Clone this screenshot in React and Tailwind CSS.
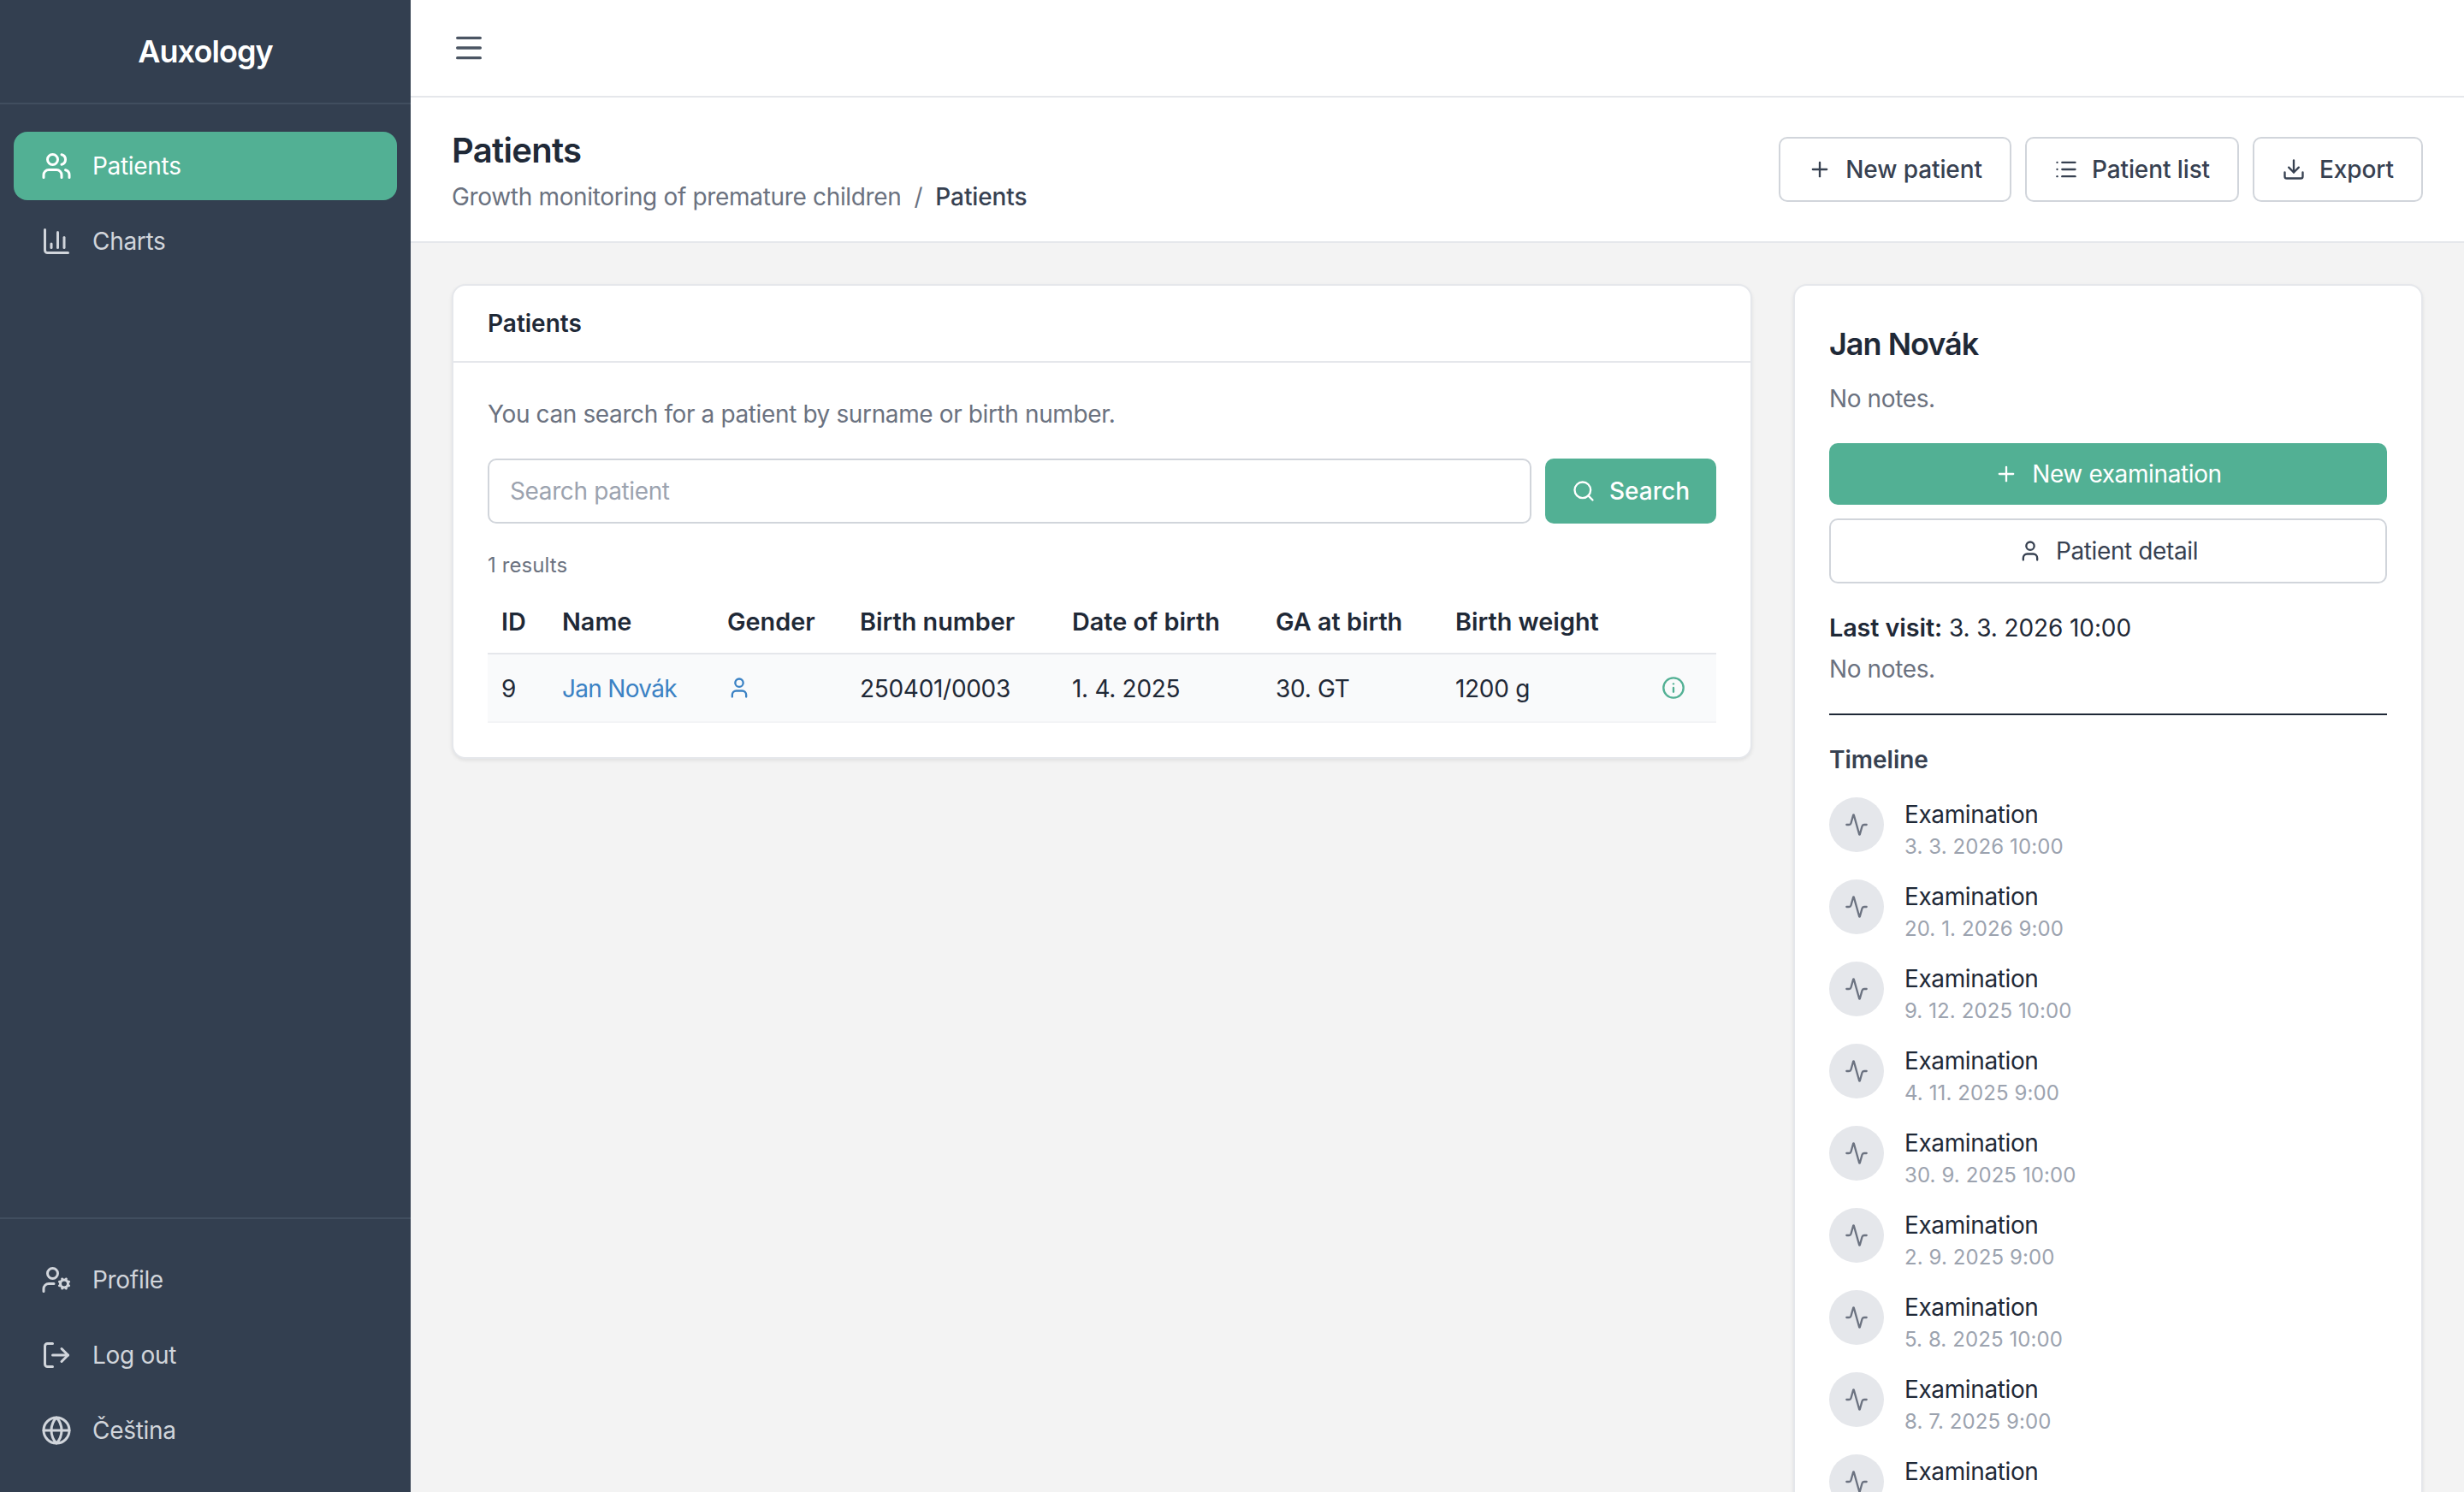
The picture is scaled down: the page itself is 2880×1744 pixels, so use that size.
import React from "react";
import { Users, ChartColumn, UserCog, LogOut, Globe, Menu, Plus, List, Download, Search, User, Info, Activity } from "lucide-react";

function NavItem({ icon: Icon, label, active }) {
  return (
    <div className={active
      ? "flex h-[80px] items-center gap-[24px] rounded-[16px] bg-[#52b094] px-[32px] text-white"
      : "flex h-[80px] items-center gap-[24px] rounded-[16px] px-[32px] text-[#d1d5db]"}>
      <Icon size={36} className="shrink-0" />
      <span className="text-[28px] font-normal leading-[40px] tracking-[-0.3px]">{label}</span>
    </div>
  );
}

function HeadButton({ icon: Icon, label }) {
  return (
    <button className="flex h-[76px] items-center gap-[16px] rounded-[10px] border-2 border-[#d1d5db] bg-white px-[32px] text-[28px] font-medium tracking-[-0.1px] text-[#374151]">
      <Icon size={28} />
      <span>{label}</span>
    </button>
  );
}

const visits = [
  "3. 3. 2026 10:00",
  "20. 1. 2026 9:00",
  "9. 12. 2025 10:00",
  "4. 11. 2025 9:00",
  "30. 9. 2025 10:00",
  "2. 9. 2025 9:00",
  "5. 8. 2025 10:00",
  "8. 7. 2025 9:00",
  "",
];

const cols = ["ID", "Name", "Gender", "Birth number", "Date of birth", "GA at birth", "Birth weight", ""];

export default function App() {
  return (
    <div className="flex h-[1744px] w-[2880px] overflow-hidden bg-[#f3f3f3] font-['Inter',sans-serif] text-[#1f2937]">
      <aside className="flex w-[480px] shrink-0 flex-col bg-[#333f50]">
        <div className="flex h-[122px] shrink-0 items-center justify-center border-b-2 border-[#414e5f] text-[36px] font-semibold tracking-[-0.9px] text-white">
          Auxology
        </div>
        <nav className="flex flex-1 flex-col gap-[8px] px-[16px] pt-[32px]">
          <NavItem icon={Users} label="Patients" active />
          <NavItem icon={ChartColumn} label="Charts" />
        </nav>
        <div className="flex flex-col gap-[8px] border-t-2 border-[#414e5f] px-[16px] pb-[32px] pt-[31px]">
          <NavItem icon={UserCog} label="Profile" />
          <NavItem icon={LogOut} label="Log out" />
          <NavItem icon={Globe} label="Čeština" />
        </div>
      </aside>

      <main className="flex min-w-0 flex-1 flex-col">
        <div className="flex h-[114px] shrink-0 items-center border-b-2 border-[#e5e7eb] bg-white pl-[48px] text-[#4b5563]">
          <Menu size={40} />
        </div>
        <div className="flex h-[170px] shrink-0 items-center justify-between border-b-2 border-[#e5e7eb] bg-white px-[48px]">
          <div className="flex flex-col pt-[4px]">
            <h1 className="text-[40px] font-semibold leading-[56px] tracking-[-0.7px] text-[#1f2937]">Patients</h1>
            <div className="mt-[4px] flex items-center text-[28px] leading-[44px] tracking-[-0.33px] text-[#6b7280]">
              <span>Growth monitoring of premature children</span>
              <span className="mx-[15px]">/</span>
              <span className="font-medium tracking-[-0.1px] text-[#374151]">Patients</span>
            </div>
          </div>
          <div className="flex gap-[16px]">
            <HeadButton icon={Plus} label="New patient" />
            <HeadButton icon={List} label="Patient list" />
            <HeadButton icon={Download} label="Export" />
          </div>
        </div>

        <div className="flex items-start gap-[48px] px-[48px] pt-[48px]">
          <section className="w-[1520px] shrink-0 rounded-[16px] border-2 border-[#e5e7eb] bg-white shadow-[0_2px_4px_rgba(0,0,0,0.08)]">
            <div className="flex h-[90px] items-center border-b-2 border-[#e5e7eb] px-[40px] text-[28px] font-semibold">
              Patients
            </div>
            <div className="px-[40px] pb-[40px] pt-[38px]">
              <p className="text-[28px] leading-[44px] tracking-[-0.38px] text-[#6b7280]">You can search for a patient by surname or birth number.</p>
              <div className="mt-[30px] flex gap-[16px]">
                <input
                  placeholder="Search patient"
                  className="h-[76px] min-w-0 flex-1 rounded-[10px] border-2 border-[#d1d5db] bg-white px-[24px] text-[28px] tracking-[-0.38px] outline-none placeholder:text-[#9ca3af]"
                />
                <button className="flex h-[76px] w-[200px] items-center justify-center gap-[16px] rounded-[10px] bg-[#52b094] text-[28px] font-medium text-white">
                  <Search size={28} />
                  <span>Search</span>
                </button>
              </div>
              <div className="mt-[29px] text-[24px] leading-[40px] tracking-[0.1px] text-[#6b7280]">1 results</div>
              <table className="mt-[7px] w-full table-fixed text-left">
                <colgroup>
                  <col className="w-[71px]" />
                  <col className="w-[193px]" />
                  <col className="w-[155px]" />
                  <col className="w-[248px]" />
                  <col className="w-[238px]" />
                  <col className="w-[210px]" />
                  <col className="w-[229px]" />
                  <col />
                </colgroup>
                <thead>
                  <tr className="h-[76px] border-b-2 border-[#e5e7eb]">
                    {cols.map((c, i) => (
                      <th key={i} className="px-[16px] pt-[3px] text-[28.8px] font-semibold text-[#1f2937]">{c}</th>
                    ))}
                  </tr>
                </thead>
                <tbody>
                  <tr className="h-[80px] border-b-2 border-[#f3f4f6] bg-[#f9fafb] text-[28px] tracking-[-0.3px] text-[#1f2937]">
                    <td className="px-[16px] pt-[2px]">9</td>
                    <td className="px-[16px] pt-[2px] tracking-[-0.7px] text-[#3b82c4]">Jan Novák</td>
                    <td className="px-[16px] text-[#3b82c4]"><User size={28} /></td>
                    <td className="px-[16px] pt-[2px]">250401/0003</td>
                    <td className="px-[16px] pt-[2px]">1. 4. 2025</td>
                    <td className="px-[16px] pt-[2px]">30. GT</td>
                    <td className="px-[16px] pt-[2px]">1200 g</td>
                    <td className="px-[16px] text-[#52b094]">
                      <div className="flex justify-end pr-[20px]"><Info size={28} /></div>
                    </td>
                  </tr>
                </tbody>
              </table>
            </div>
          </section>

          <section className="w-[736px] shrink-0 rounded-[16px] border-2 border-[#e5e7eb] bg-white px-[40px] pb-[40px] pt-[44px] shadow-[0_2px_4px_rgba(0,0,0,0.08)]">
            <h2 className="text-[36px] font-semibold leading-[48px] tracking-[-1px]">Jan Novák</h2>
            <p className="mt-[18px] text-[28px] leading-[44px] tracking-[-0.38px] text-[#6b7280]">No notes.</p>
            <button className="mt-[30px] flex h-[72px] w-full items-center justify-center gap-[16px] rounded-[10px] bg-[#52b094] text-[28px] tracking-[-0.38px] text-white">
              <Plus size={28} />
              <span>New examination</span>
            </button>
            <button className="mt-[16px] flex h-[76px] w-full items-center justify-center gap-[16px] rounded-[10px] border-2 border-[#d1d5db] bg-white text-[28px] tracking-[-0.38px] text-[#374151]">
              <User size={28} />
              <span>Patient detail</span>
            </button>
            <p className="mt-[30px] text-[28px] leading-[44px] tracking-[-0.1px]"><span className="text-[28.8px] font-semibold">Last visit:</span> 3. 3. 2026 10:00</p>
            <p className="mt-[4px] text-[28px] leading-[44px] tracking-[-0.38px] text-[#6b7280]">No notes.</p>
            <hr className="mt-[30px] border-t-2 border-[#1f2937]" />
            <h3 className="mt-[30px] text-[28px] font-semibold leading-[44px] text-[#374151]">Timeline</h3>
            <ul className="mt-[22px] flex flex-col gap-[24px]">
              {visits.map((d, i) => (
                <li key={i} className="flex gap-[24px]">
                  <div className="flex h-[64px] w-[64px] shrink-0 items-center justify-center rounded-full bg-[#e5e7eb] text-[#6b7280]">
                    <Activity size={28} />
                  </div>
                  <div className="flex flex-col">
                    <span className="text-[28px] leading-[40px] tracking-[-0.38px]">Examination</span>
                    <span className="h-[32px] pt-[4px] text-[24px] leading-[28px] tracking-[0.1px] text-[#9ca3af]">{d}</span>
                  </div>
                </li>
              ))}
            </ul>
          </section>
        </div>
      </main>
    </div>
  );
}
